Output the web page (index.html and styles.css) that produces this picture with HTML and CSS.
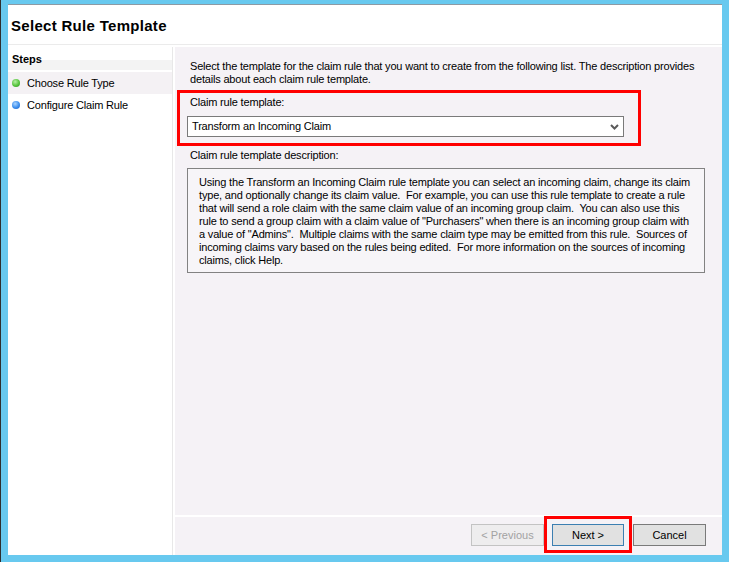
FILE: index.html
```html
<!DOCTYPE html>
<html>
<head>
<meta charset="utf-8">
<link rel="stylesheet" href="styles.css">
</head>
<body>
<div class="frame">
  <div class="window">
    <div class="header">Select Rule Template</div>
    <div class="header-line"></div>
    <div class="main">
      <div class="steps">
        <div class="steps-title">Steps</div>
        <div class="step step-current"><span class="dot dot-green"></span>Choose Rule Type</div>
        <div class="step"><span class="dot dot-blue"></span>Configure Claim Rule</div>
      </div>
      <div class="divider"></div>
      <div class="right">
        <div class="content">
          <p class="intro">Select the template for the claim rule that you want to create from the following list. The description provides<br>details about each claim rule template.</p>
          <div class="highlight">
            <div class="label">Claim rule template:</div>
            <div class="select">
              <span>Transform an Incoming Claim</span>
              <svg class="chev" width="9" height="6" viewBox="0 0 9 6"><path d="M1 1 L4.5 4.5 L8 1" fill="none" stroke="#5a5a5a" stroke-width="2"/></svg>
            </div>
          </div>
          <div class="label desc-label">Claim rule template description:</div>
          <div class="desc">Using the Transform an Incoming Claim rule template you can select an incoming claim, change its claim
type, and optionally change its claim value.  For example, you can use this rule template to create a rule
that will send a role claim with the same claim value of an incoming group claim.  You can also use this
rule to send a group claim with a claim value of "Purchasers" when there is an incoming group claim with
a value of "Admins".  Multiple claims with the same claim type may be emitted from this rule.  Sources of
incoming claims vary based on the rules being edited.  For more information on the sources of incoming
claims, click Help.</div>
        </div>
        <div class="buttons">
          <button class="btn btn-disabled">&lt; Previous</button>
          <span class="highlight-btn"><button class="btn btn-default">Next &gt;</button></span>
          <button class="btn btn-cancel">Cancel</button>
        </div>
      </div>
    </div>
  </div>
</div>
</body>
</html>
```
FILE: styles.css
```css
html, body {
  margin: 0;
  padding: 0;
}
body {
  background: #68c9ef;
  font-family: "Liberation Sans", Arial, sans-serif;
  font-size: 11px;
  line-height: 13px;
  letter-spacing: -0.18px;
  color: #000;
}
.frame {
  width: 729px;
  height: 562px;
  box-sizing: border-box;
  border-left: 1px solid #2e2e2e;
  padding: 4px 7px 7px 7px;
}
.window {
  height: 551px;
  border-top: 1px solid #8d9aa3;
  box-sizing: border-box;
  background: #fff;
  display: flex;
  flex-direction: column;
}
.header {
  height: 39px;
  box-sizing: border-box;
  padding: 12px 0 0 3px;
  font-size: 15px;
  line-height: 18px;
  font-weight: bold;
  letter-spacing: 0.3px;
}
.header-line {
  height: 1px;
  background: #ebebeb;
  margin-bottom: 2px;
}
.main {
  flex: 1;
  display: flex;
}
.steps {
  width: 164px;
  background: #fff;
}
.steps-title {
  height: 23px;
  box-sizing: border-box;
  padding: 6px 0 0 4px;
  font-weight: bold;
  letter-spacing: 0;
  background: linear-gradient(to bottom, #fff 0, #fff 13px, #f3f3f3 13px, #f3f3f3 23px);
  margin-bottom: 2px;
}
.step {
  height: 22px;
  display: flex;
  align-items: center;
  padding-left: 4px;
}
.step-current {
  background: #f4f1f4;
}
.dot {
  width: 8px;
  height: 8px;
  border-radius: 50%;
  margin-right: 7px;
}
.dot-green {
  background: radial-gradient(circle at 40% 35%, #b6f0a4 0, #56c43d 55%, #2e8d21 100%);
}
.dot-blue {
  background: radial-gradient(circle at 40% 35%, #a9d4ff 0, #3b8ded 55%, #1c5fc0 100%);
}
.divider {
  width: 1px;
  background: #e8e8e8;
  margin-right: 2px;
}
.right {
  flex: 1;
  display: flex;
  flex-direction: column;
}
.content {
  flex: 1;
  background: #f5f2f6;
  border-bottom: 2px solid #fff;
  padding: 13px 0 0 15px;
}
.intro {
  margin: 0;
  white-space: nowrap;
}
.highlight {
  width: 464px;
  height: 56px;
  box-sizing: border-box;
  border: 3px solid #f00;
  margin: 4px 0 0 -13px;
  padding: 3px 0 0 7px;
}
.label {
  padding-left: 3px;
}
.select {
  margin-top: 7px;
  width: 437px;
  height: 21px;
  box-sizing: border-box;
  border: 1px solid #7a7a7a;
  background: #fff;
  display: flex;
  align-items: center;
  justify-content: space-between;
  padding: 0 4px 0 4px;
}
.desc-label {
  margin: 3px 0 0 0;
  padding-left: 0;
}
.desc {
  margin: 6px 0 0 -3px;
  width: 518px;
  height: 105px;
  box-sizing: border-box;
  border: 1px solid #828282;
  background: #f7f5f8;
  padding: 7px 0 0 11px;
  white-space: pre;
}
.buttons {
  height: 38px;
  background: #f5f2f6;
  display: flex;
  justify-content: flex-end;
  align-items: flex-start;
  padding-right: 16px;
}
.btn {
  font-family: "Liberation Sans", Arial, sans-serif;
  font-size: 11px;
  width: 73px;
  height: 22px;
  box-sizing: border-box;
  margin: 7px 0 0 0;
  padding: 0;
  background: #e1e1e1;
  border: 1px solid #adadad;
  color: #000;
}
.btn-disabled {
  background: #eeedee;
  border-color: #c3c3c3;
  color: #a2a2a2;
}
.btn-default {
  width: 72px;
  margin: 0;
  border-color: #3c7fb1;
}
.btn-cancel {
  margin-left: 1px;
  border-color: #7a7a7a;
}
.highlight-btn {
  display: block;
  margin-top: -1px;
  border: 3px solid #f00;
  padding: 5px 5px 4px 5px;
}
```
